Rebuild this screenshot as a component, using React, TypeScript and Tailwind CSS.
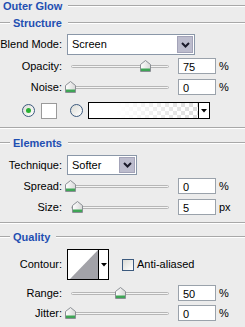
import type { ReactNode } from 'react';

const FONT = "font-['Liberation_Sans','Arial',sans-serif]";

function Heading({ title, lead = false }: { title: string; lead?: boolean }) {
  return (
    <div className="flex items-center h-[12px]">
      {lead ? <div className="w-[10px] h-[2px] border-t border-[#a8a8a8] border-b-white border-b mr-[3px]" /> : <div className="w-[3px]" />}
      <span className="text-[11px] font-bold text-[#1f4fb2] leading-none">{title}</span>
      <div className="flex-1 ml-[6px] h-[2px] border-t border-[#a8a8a8] border-b border-b-white" />
    </div>
  );
}

function Separator() {
  return <div className="h-[2px] border-t border-[#a8a8a8] border-b border-b-white" />;
}

function Label({ children }: { children: ReactNode }) {
  return <div className="w-[63px] shrink-0 text-right text-[11px] text-black leading-none pr-[1px]">{children}</div>;
}

function Thumb() {
  return (
    <svg width="11" height="12" viewBox="0 0 11 12">
      <defs>
        <linearGradient id="tg" x1="0" y1="0" x2="1" y2="0">
          <stop offset="0" stopColor="#ffffff" />
          <stop offset="1" stopColor="#d8d8d8" />
        </linearGradient>
      </defs>
      <path d="M0.5 4.5 L5.5 0.5 L10.5 4.5 L10.5 11.5 L0.5 11.5 Z" fill="url(#tg)" stroke="#8a8f94" />
      <rect x="1" y="8.5" width="9" height="2.5" fill="#3fa556" />
    </svg>
  );
}

function SliderRow({ label, value, pos, unit }: { label: string; value: string; pos: number; unit: string }) {
  return (
    <div className="flex items-center h-[16px]">
      <Label>{label}</Label>
      <div className="relative w-[106px] h-[16px] ml-[4px] shrink-0">
        <div className="absolute left-[4px] right-[4px] top-[7px] h-[3px] rounded-full border border-[#b6b6b6] bg-[#f4f4f4]" />
        <div className="absolute top-[2px]" style={{ left: pos - 5 }}>
          <Thumb />
        </div>
      </div>
      <div className="ml-[5px] w-[38px] h-[16px] bg-white border border-[#9aa2ab] text-[11px] leading-none pl-[4px] pt-[3px]">{value}</div>
      <span className="ml-[3px] text-[11px] leading-none">{unit}</span>
    </div>
  );
}

function Chevron() {
  return (
    <svg width="9" height="6" viewBox="0 0 9 6">
      <path d="M1 1 L4.5 4.5 L8 1" fill="none" stroke="#1a1a2a" strokeWidth="2" />
    </svg>
  );
}

function Select({ value, width }: { value: string; width: number }) {
  return (
    <div className="flex h-full bg-white border border-[#8a97a8]" style={{ width }}>
      <div className="flex-1 flex items-center pl-[4px] text-[11px] leading-none">{value}</div>
      <div className="w-[16px] m-[1px] flex items-center justify-center bg-[#bcbccd] border border-[#a3a3b8]">
        <Chevron />
      </div>
    </div>
  );
}

function Arrow() {
  return (
    <svg width="6" height="4" viewBox="0 0 6 4">
      <path d="M0 0 L6 0 L3 3.5 Z" fill="#000" />
    </svg>
  );
}

function Radio({ on }: { on?: boolean }) {
  return (
    <div className="w-[13px] h-[13px] rounded-full border border-[#3c5a7e] bg-gradient-to-br from-[#dcdcd6] to-white flex items-center justify-center">
      {on && <div className="w-[5px] h-[5px] rounded-full bg-[#28b032]" />}
    </div>
  );
}

export default function App() {
  return (
    <div className={`w-[245px] h-[327px] bg-[#ececec] overflow-hidden flex flex-col text-black ${FONT}`}>
      <Heading title="Outer Glow" />
      <div className="mt-[5px]">
        <Heading title="Structure" lead />
      </div>

      <div className="mt-[5px] flex items-center h-[21px]">
        <Label>Blend Mode:</Label>
        <div className="ml-[4px] h-[21px]">
          <Select value="Screen" width={128} />
        </div>
      </div>

      <div className="mt-[3px]">
        <SliderRow label="Opacity:" value="75" pos={78} unit="%" />
      </div>
      <div className="mt-[5px]">
        <SliderRow label="Noise:" value="0" pos={3} unit="%" />
      </div>

      <div className="mt-[7px] flex items-center h-[17px] pl-[22px]">
        <Radio on />
        <div className="ml-[6px] w-[16px] h-[16px] bg-white border border-[#9a9a9a]" />
        <div className="ml-[13px]">
          <Radio />
        </div>
        <div className="ml-[5px] w-[122px] h-[17px] border border-black flex">
          <div
            className="flex-1 bg-white"
            style={{
              backgroundImage:
                'linear-gradient(to right, #fff 25%, rgba(255,255,255,0)), repeating-conic-gradient(#dcdcdc 0 25%, #fff 0 50%)',
              backgroundSize: '100% 100%, 8px 8px',
            }}
          />
          <div className="w-[11px] border-l border-black bg-white flex items-center justify-center">
            <Arrow />
          </div>
        </div>
      </div>

      <div className="mt-[8px]">
        <Separator />
      </div>
      <div className="mt-[8px]">
        <Heading title="Elements" lead />
      </div>

      <div className="mt-[6px] flex items-center h-[20px]">
        <Label>Technique:</Label>
        <div className="ml-[4px] h-[20px]">
          <Select value="Softer" width={70} />
        </div>
      </div>

      <div className="mt-[3px]">
        <SliderRow label="Spread:" value="0" pos={3} unit="%" />
      </div>
      <div className="mt-[5px]">
        <SliderRow label="Size:" value="5" pos={10} unit="px" />
      </div>

      <div className="mt-[7px]">
        <Separator />
      </div>
      <div className="mt-[7px]">
        <Heading title="Quality" lead />
      </div>

      <div className="mt-[6px] flex items-center h-[31px]">
        <Label>Contour:</Label>
        <div className="ml-[4px] w-[42px] h-[31px] border border-black flex bg-white">
          <svg width="30" height="29" viewBox="0 0 30 29" className="shrink-0">
            <path d="M2 29 L30 0 L30 29 Z" fill="#a2a2a8" />
          </svg>
          <div className="flex-1 border-l border-black flex items-center justify-center">
            <Arrow />
          </div>
        </div>
        <div className="ml-[13px] w-[12px] h-[12px] border border-[#3c5a7e] bg-gradient-to-br from-[#dcdcd6] to-white" />
        <span className="ml-[3px] text-[11px] leading-none">Anti-aliased</span>
      </div>

      <div className="mt-[5px]">
        <SliderRow label="Range:" value="50" pos={53} unit="%" />
      </div>
      <div className="mt-[4px]">
        <SliderRow label="Jitter:" value="0" pos={3} unit="%" />
      </div>
    </div>
  );
}
